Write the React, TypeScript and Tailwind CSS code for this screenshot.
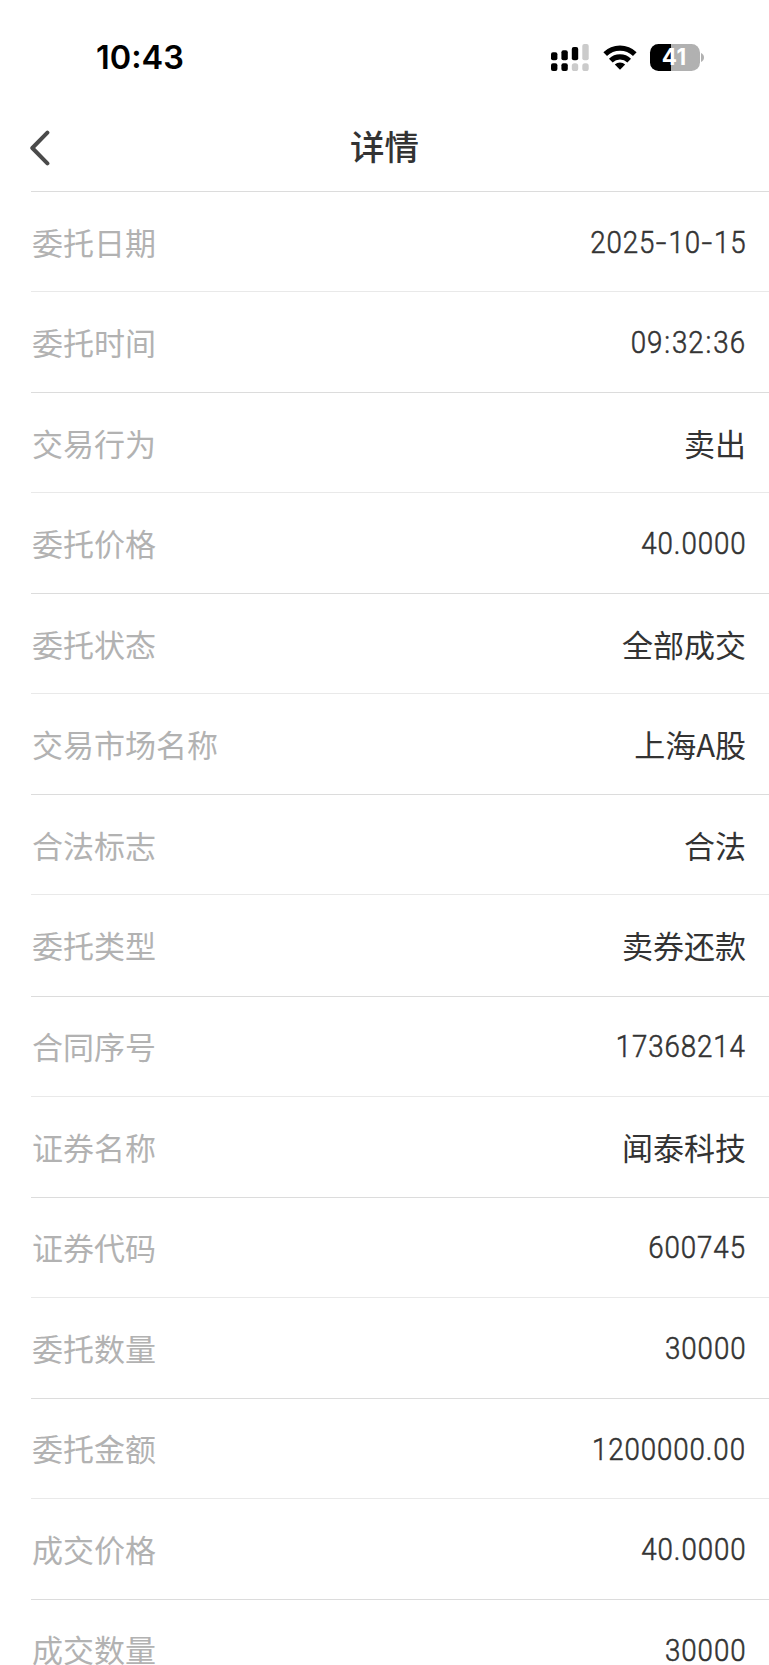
import React from 'react';

const rows = [
  { label: '委托日期', value: '2025-10-15' },
  { label: '委托时间', value: '09:32:36' },
  { label: '交易行为', value: '卖出' },
  { label: '委托价格', value: '40.0000' },
  { label: '委托状态', value: '全部成交' },
  { label: '交易市场名称', value: '上海A股' },
  { label: '合法标志', value: '合法' },
  { label: '委托类型', value: '卖券还款' },
  { label: '合同序号', value: '17368214' },
  { label: '证券名称', value: '闻泰科技' },
  { label: '证券代码', value: '600745' },
  { label: '委托数量', value: '30000' },
  { label: '委托金额', value: '1200000.00' },
  { label: '成交价格', value: '40.0000' },
  { label: '成交数量', value: '30000' },
];

const SignalIcon = () => (
  <svg width="38" height="27" viewBox="0 0 38 27" className="shrink-0">
    <rect x="0" y="8.3" width="6.4" height="8" rx="2" />
    <rect x="10.4" y="6.2" width="6.4" height="10.1" rx="2" />
    <rect x="20.8" y="3.1" width="6.4" height="13.2" rx="2" />
    <rect x="31.3" y="0" width="6.4" height="16.3" rx="2" fill="#cbcbcb" />
    <rect x="0" y="19.2" width="6.4" height="7.8" rx="2" />
    <rect x="10.4" y="19.2" width="6.4" height="7.8" rx="2" />
    <rect x="20.8" y="19.2" width="6.4" height="7.8" rx="2.6" fill="#cbcbcb" />
    <rect x="31.3" y="19.2" width="6.4" height="7.8" rx="2.6" fill="#cbcbcb" />
  </svg>
);

const WifiIcon = () => (
  <svg width="34" height="25" viewBox="0 0 34 25" className="shrink-0" fill="none" stroke="#000" strokeWidth="5.2">
    <path d="M2.2 9.2a21.2 21.2 0 0 1 29.6 0" />
    <path d="M7.8 15.6a13.2 13.2 0 0 1 18.4 0" />
    <path d="M17 24.8l-5.2-5.2a7.6 7.6 0 0 1 10.4 0z" fill="#000" stroke="none" />
  </svg>
);

const Battery = () => (
  <div className="flex items-center gap-[1.5px]">
    <div className="flex h-[27px] w-[49.5px] items-center justify-center rounded-[8.5px] bg-linear-to-r from-black from-[42.5%] to-[#b1b1b1] to-[42.5%] pr-px font-['Inter',sans-serif] text-[22.5px] leading-none font-bold tracking-[0.5px] text-white">
      41
    </div>
    <svg width="3" height="9" viewBox="0 0 3 9" fill="#b1b1b1">
      <path d="M0 0C1.8.8 3 2.5 3 4.5S1.8 8.2 0 9z" />
    </svg>
  </div>
);

// narrow digits, with wider separators
const NumberValue = ({ value }: { value: string }) => (
  <span className="mt-[3px] inline-block origin-right scale-x-[0.88] font-['Roboto',sans-serif] text-[31.5px] font-light tracking-[1px] [-webkit-text-stroke:0.55px_#333]">
    {value.split('').map((ch, i) => {
      if (ch === '-') return <span key={i} className="mx-[2.4px] inline-block scale-x-[1.35]">-</span>;
      if (ch === ':') return <span key={i} className="mx-[1.2px]">:</span>;
      return ch;
    })}
  </span>
);

const App = () => (
  <div className="h-[1665px] w-[769px] overflow-hidden bg-white font-['Noto_Sans_CJK_SC',sans-serif]">
    <div className="flex h-[114px] items-center justify-between pl-[96px] pr-[65px]">
      <span className="pt-[2px] font-['Inter',sans-serif] text-[32.5px] leading-none font-semibold text-black">
        10<span className="inline-block -translate-y-px">:</span>43
      </span>
      <div className="flex items-center">
        <SignalIcon />
        <div className="ml-[14px] mr-[13px]"><WifiIcon /></div>
        <Battery />
      </div>
    </div>

    <div className="grid h-[77px] grid-cols-[1fr_auto_1fr] items-center pb-[10px]">
      <svg width="20" height="36" viewBox="0 0 20 36" className="ml-[30px] mt-[1px]" fill="none" stroke="#4a4a4a" strokeWidth="4" strokeLinecap="round" strokeLinejoin="round">
        <path d="M17.4 2.6L2.3 18l15.1 15.4" />
      </svg>
      <h1 className="pb-[4px] text-[34.5px] leading-none font-medium text-[#333]">详情</h1>
    </div>

    <div className="pl-[31px]">
      {rows.map(({ label, value }) => (
        <div
          key={label}
          className="flex h-[101.14px] items-center justify-between border-t border-[#dcdcdc] pb-px pr-[23px] text-[31px] leading-none odd:h-[100px] even:border-[#e9e9e9]"
        >
          <span className="pl-px text-[#b2b2b2]">{label}</span>
          <span className="text-[#333]">{/^\d/.test(value) ? <NumberValue value={value} /> : value}</span>
        </div>
      ))}
    </div>
  </div>
);

export default App;
